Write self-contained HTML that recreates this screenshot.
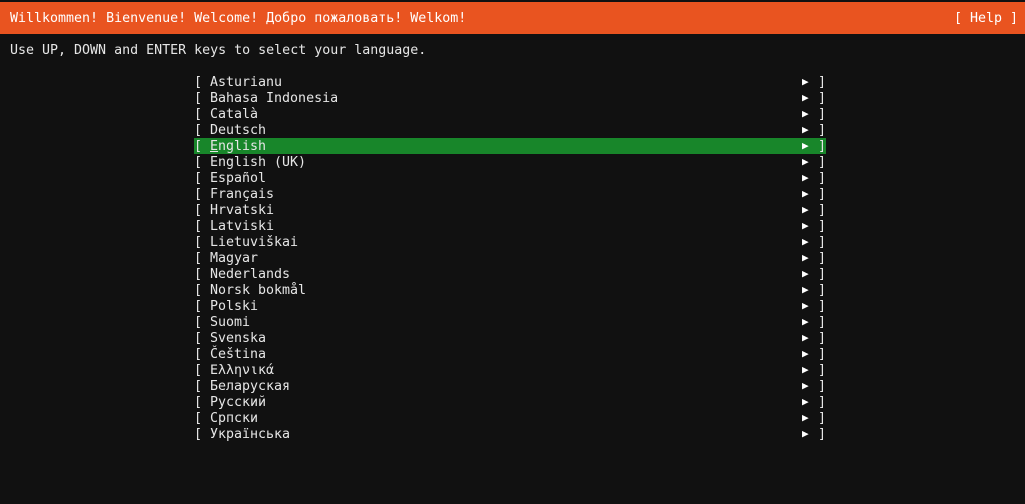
<!DOCTYPE html>
<html><head><meta charset="utf-8"><style>
body{margin:0;width:1025px;height:504px;background:#111111;overflow:hidden;position:relative;font-family:"DejaVu Sans Mono","Liberation Mono",monospace;font-size:13.3px;color:#e6e6e6}
.hdr{position:absolute;left:0;top:2px;width:1025px;height:32px;background:#e95420}
.t{position:absolute;white-space:pre;line-height:16px;height:16px}
.sel{position:absolute;left:194px;top:138px;width:632px;height:16px;background:#18862a}
</style></head><body>
<div class="hdr"></div>
<div class="t" style="left:10px;top:11px;color:#fff">Willkommen! Bienvenue! Welcome! Добро пожаловать! Welkom!</div>
<div class="t" style="left:954px;top:11px;color:#fff">[ Help ]</div>
<div class="t" style="left:10px;top:43px">Use UP, DOWN and ENTER keys to select your language.</div>
<div class="sel"></div>
<div id="list"></div>
<script>
var L=["Asturianu","Bahasa Indonesia","Català","Deutsch","English","English (UK)","Español","Français","Hrvatski","Latviski","Lietuviškai","Magyar","Nederlands","Norsk bokmål","Polski","Suomi","Svenska","Čeština","Ελληνικά","Беларуская","Русский","Српски","Українська"];
var h="";L.forEach(function(n,i){var y=75+16*i;
h+='<div class="t" style="left:194px;top:'+y+'px">[</div><div class="t" style="left:210px;top:'+y+'px">'+(i==4?'<u>E</u>nglish':n)+'</div><div class="t" style="left:802px;top:'+(y-1)+'px;font-size:11px;color:#fff">▶</div><div class="t" style="left:818px;top:'+y+'px">]</div>';});
document.getElementById("list").innerHTML=h;
</script>
</body></html>
